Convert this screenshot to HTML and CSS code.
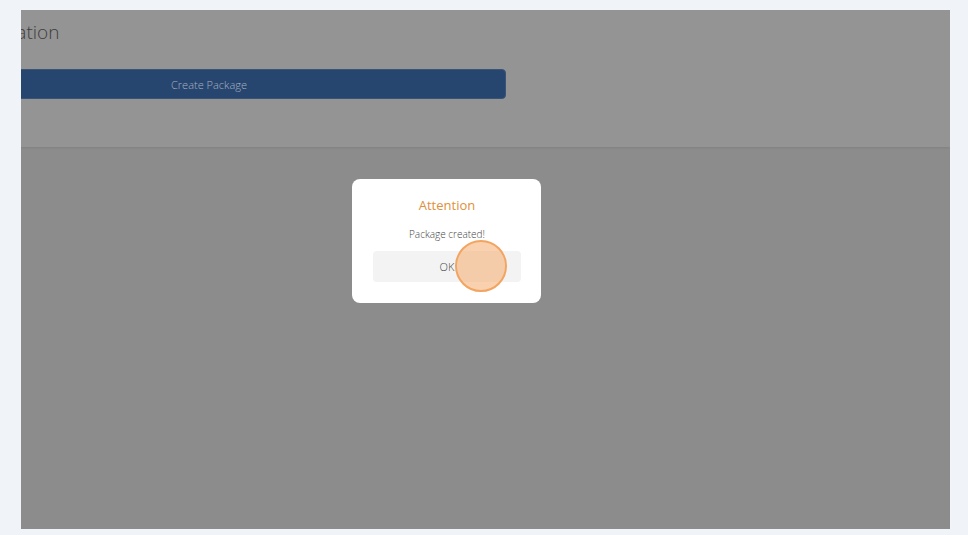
FILE: index.html
```html
<!DOCTYPE html>
<html lang="en">
<head>
  <meta charset="UTF-8" />
  <meta name="viewport" content="width=device-width, initial-scale=1" />
  <title>Package Creation</title>
  <link rel="stylesheet" href="styles.css">
</head>
<body>
  <div class="frame">
    <div class="page">
      <section class="card">
        <h2 class="title">Package Creation</h2>
        <button class="create-btn">Create Package</button>
      </section>
    </div>

    <div class="modal">
      <h3 class="modal-title">Attention</h3>
      <p class="modal-text">Package created!</p>
      <button class="ok-btn">OK</button>
    </div>

    <span class="click-dot"></span>
  </div>
</body>
</html>
```

FILE: styles.css
```css
body {
  margin: 0;
  background: #f0f4f9;
  padding: 10px 18px 6px 21px;
  font-family: "Open Sans", Arial, sans-serif;
}
.frame {
  position: relative;
  width: 929px;
  height: 519px;
  overflow: hidden;
  background: #8c8c8c;
}
.page {
  margin-left: -110px;
}
.card {
  background: #949494;
  height: 137px;
  padding-top: 10px;
  box-sizing: border-box;
  box-shadow: 0 1px 2px rgba(0, 0, 0, 0.08);
}
.title {
  margin: 0 0 0 1px;
  font-size: 19px;
  font-weight: 300;
  line-height: 24px;
  color: #3c3c3c;
}
.create-btn {
  display: block;
  margin: 25px 0 0 1px;
  width: 594px;
  height: 30px;
  background: #27466f;
  border: 1px solid #3a5478;
  border-radius: 4px;
  color: #a8b1c2;
  font-family: inherit;
  font-size: 11px;
  font-weight: 300;
  padding: 0;
}
.modal {
  position: absolute;
  left: 331px;
  top: 169px;
  width: 189px;
  height: 124px;
  box-sizing: border-box;
  background: #fff;
  border-radius: 8px;
  padding: 18px 20px 0 21px;
  text-align: center;
}
.modal-title {
  margin: 0;
  font-size: 13px;
  font-weight: 400;
  line-height: 17px;
  color: #e0903c;
}
.modal-text {
  margin: 13px 0 0;
  font-size: 10px;
  font-weight: 300;
  line-height: 14px;
  color: #444;
}
.ok-btn {
  display: block;
  margin-top: 10px;
  width: 148px;
  height: 31px;
  background: #f3f3f3;
  border: none;
  border-radius: 4px;
  color: #444;
  font-family: inherit;
  font-size: 11px;
  font-weight: 300;
  padding: 0;
}
.click-dot {
  position: absolute;
  left: 434px;
  top: 230px;
  width: 48px;
  height: 48px;
  border-radius: 50%;
  border: 2px solid #f2a461;
  background: rgba(246, 178, 120, 0.6);
}
```
